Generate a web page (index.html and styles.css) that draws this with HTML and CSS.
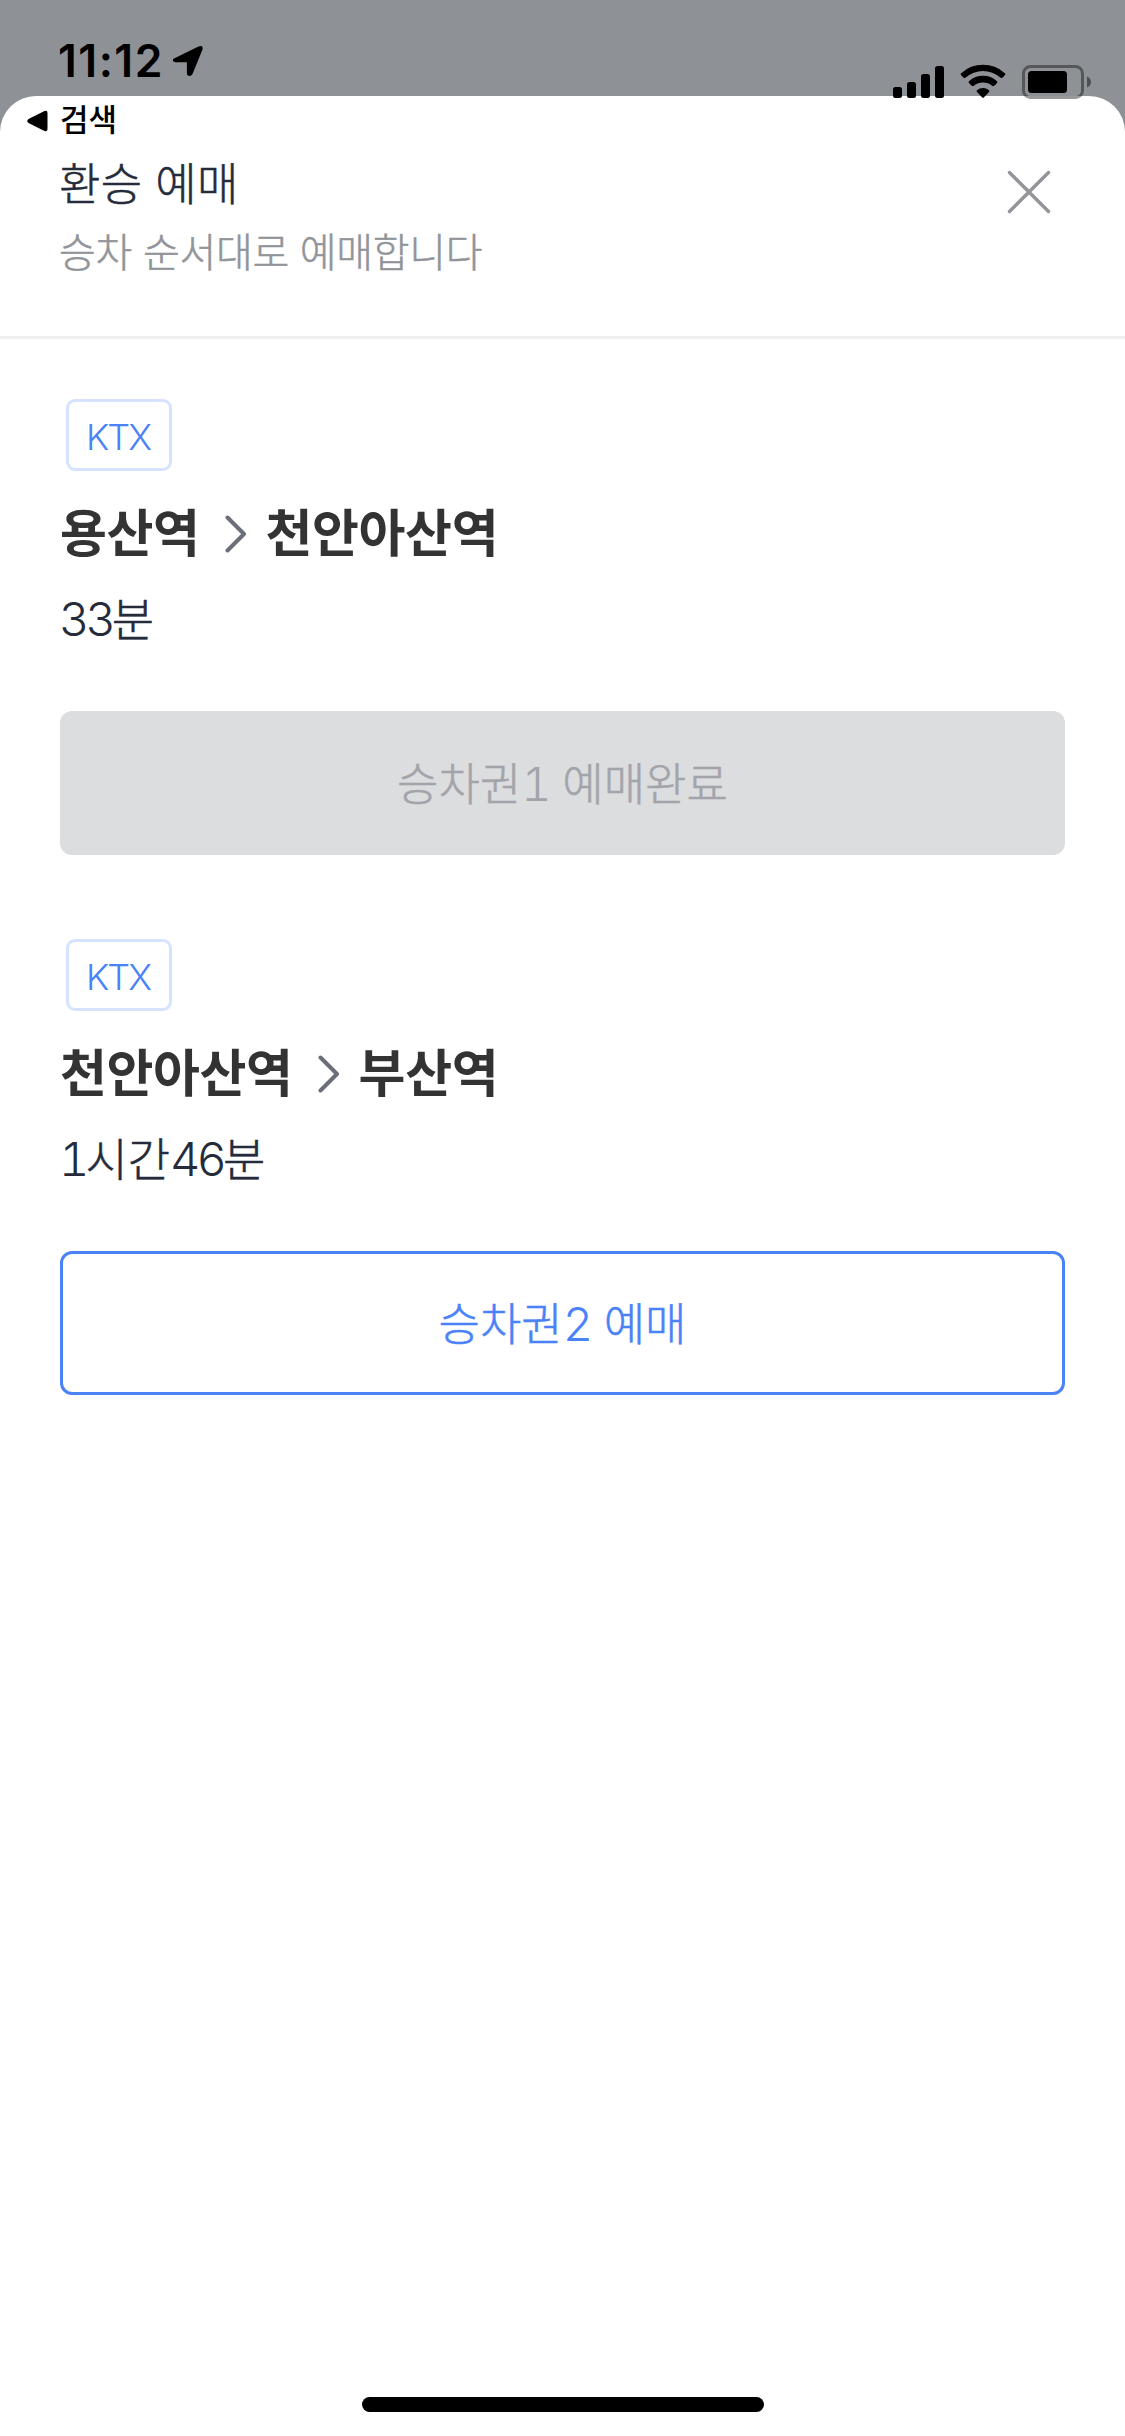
FILE: index.html
```html
<!DOCTYPE html>
<html lang="ko">
<head>
<meta charset="utf-8">
<title>환승 예매</title>
<link rel="stylesheet" href="styles.css">
</head>
<body>
<div class="screen">
  <div class="status">
    <span class="time">11:12</span>
    <svg class="location" width="32" height="32" viewBox="0 0 32 32"><path d="M2.500 13.200 26.500 1.600Q31.500-.3 30.500 4.500L20.500 29Q19.600 31 17.500 31 15 30.800 14.900 28V17.200H3.300Q.8 17 .8 15 .8 13.900 2.500 13.200Z"/></svg>
    <svg class="indicators" width="200" height="36" viewBox="0 0 200 36">
      <rect x="1" y="23" width="9" height="11" rx="2.500"/>
      <rect x="15" y="18" width="9" height="16" rx="2.500"/>
      <rect x="29" y="10" width="9" height="24" rx="2.500"/>
      <rect x="43" y="2" width="9" height="32" rx="2.500"/>
      <path d="M69.200 9.200Q68 10 69.200 11.200L71.700 13.700Q72.700 14.500 73.800 13.600A26 26 0 0 1 108.200 13.600Q109.300 14.500 110.300 13.700L112.800 11.200Q114 10 112.800 9.200A32 32 0 0 0 69.200 9.200Z"/>
      <path d="M77 17.200Q76 18 77.200 19.200L79.700 21.700Q80.700 22.500 81.900 21.700A14.500 14.500 0 0 1 100.100 21.700Q101.300 22.500 102.300 21.700L104.800 19.200Q106 18 105 17.200A21 21 0 0 0 77 17.200Z"/>
      <path d="M85 26.200Q84 27 85 28L90 33.200Q91 34.200 92 33.200L97 28Q98 27 97 26.200A9.500 9.500 0 0 0 85 26.200Z"/>
      <rect class="battery" x="131.500" y="2.500" width="59" height="31" rx="7"/>
      <rect x="136" y="7" width="39" height="22" rx="3.500"/>
      <path class="battery-tip" d="M195 12.500Q199 14 199 18T195 23.500Z"/>
    </svg>
  </div>
  <div class="back">
    <svg width="21" height="22" viewBox="0 0 21 22"><path d="M1.500 9 17.500 1Q20.500 0 20.500 3V19Q20.500 22 17.500 21L1.500 13Q-1 11 1.500 9Z"/></svg>
    <span>검색</span>
  </div>
  <main class="sheet">
    <header class="header">
      <div>
        <h1 class="title">환승 예매</h1>
        <p class="subtitle">승차 순서대로 예매합니다</p>
      </div>
      <svg class="close" width="44" height="44" viewBox="0 0 44 44"><path d="M2.500 2.500 41.500 41.500M41.500 2.500 2.500 41.500"/></svg>
    </header>
    <section class="leg">
      <span class="badge">KTX</span>
      <h2 class="route"><span>용산역</span><svg class="chevron" width="22" height="38" viewBox="0 0 22 38"><path d="M2.500 2.500 19 19 2.500 35.500"/></svg><span>천안아산역</span></h2>
      <p class="duration"><span class="num">33</span>분</p>
      <button class="button done" disabled>승차권<span class="num">1</span> 예매완료</button>
    </section>
    <section class="leg">
      <span class="badge">KTX</span>
      <h2 class="route"><span>천안아산역</span><svg class="chevron" width="22" height="38" viewBox="0 0 22 38"><path d="M2.500 2.500 19 19 2.500 35.500"/></svg><span>부산역</span></h2>
      <p class="duration"><span class="num">1</span>시간<span class="num">46</span>분</p>
      <button class="button">승차권<span class="num">2</span> 예매</button>
    </section>
  </main>
  <div class="home"></div>
</div>
</body>
</html>
```
FILE: styles.css
```css
* { box-sizing: border-box; }
body { margin: 0; }
h1, h2, p { margin: 0; }
svg { display: block; flex: none; }
.screen {
  position: relative;
  width: 1125px;
  height: 2436px;
  padding-top: 96px;
  background: #8e9195;
  overflow: hidden;
  font-family: "Noto Sans CJK KR", sans-serif;
  font-weight: 300;
}
.status {
  position: absolute;
  z-index: 1;
  inset: 0 0 auto;
  height: 100px;
  padding: 38px 33px 0 58px;
  display: flex;
  align-items: flex-start;
}
.time {
  width: 114px;
  font: 600 44.5px/46px Inter, sans-serif;
  letter-spacing: 1.5px;
}
.location { margin-top: 7px; }
.indicators { margin: 26px 0 0 auto; }
.battery { fill: none; stroke: rgba(0, 0, 0, 0.4); stroke-width: 3; }
.battery-tip { fill: rgba(0, 0, 0, 0.45); }
.back {
  position: absolute;
  z-index: 1;
  left: 27px;
  top: 98px;
  height: 40px;
  display: flex;
  align-items: center;
  gap: 12px;
  font-size: 31px;
  font-weight: 500;
  line-height: 40px;
}
.back svg { margin-top: 5px; }
.sheet {
  height: 2340px;
  border-radius: 36px 36px 0 0;
  background: #fff;
}
.header {
  height: 243px;
  padding: 55px 74px 0 59px;
  border-bottom: 3px solid #eee;
  display: flex;
  justify-content: space-between;
}
.title {
  font-size: 45px;
  font-weight: 300;
  line-height: 62px;
  letter-spacing: 0.3px;
  color: #252b3a;
}
.subtitle {
  margin-top: 7px;
  font-size: 40px;
  line-height: 60px;
  letter-spacing: -0.3px;
  color: #919499;
}
.title, .subtitle, .duration, .button { -webkit-text-stroke: 0.5px currentColor; }
.close { margin-top: 19px; fill: none; stroke: #94959b; stroke-width: 3.5; stroke-linecap: round; }
.leg {
  height: 540px;
  padding: 60px 60px 0;
  display: flex;
  flex-direction: column;
  align-items: flex-start;
}
.badge {
  width: 106px;
  height: 72px;
  margin-left: 6px;
  border: 3px solid #d6e3ff;
  border-radius: 9px;
  padding-right: 2px;
  font: 300 36px/70px Inter, sans-serif;
  letter-spacing: -2px;
  text-align: center;
  color: #4a82f7;
}
.route {
  height: 70px;
  margin-top: 24px;
  display: flex;
  align-items: center;
  font-size: 51px;
  font-weight: 700;
  line-height: 70px;
  letter-spacing: -0.4px;
  color: #333;
}
.chevron { margin: 8px 19px 0 25px; fill: none; stroke: #6b6d78; stroke-width: 4; stroke-linecap: round; stroke-linejoin: round; }
.duration {
  height: 62px;
  margin: 20px 0 0 -1px;
  font-size: 46px;
  line-height: 62px;
  color: #252b3a;
}
.num {
  font-family: Inter, sans-serif;
  font-size: 47px;
  font-variant-numeric: tabular-nums;
  letter-spacing: -4px;
  line-height: 1;
  -webkit-text-stroke: 0;
}
.button {
  width: 100%;
  height: 144px;
  margin-top: 64px;
  padding: 0 0 3px;
  border: 3px solid #4a82f7;
  border-radius: 12px;
  background: #fff;
  font: inherit;
  font-size: 45px;
  word-spacing: 2px;
  color: #4a82f7;
}
.done { border-color: #dcddde; background: #dcddde; color: #a3a4aa; }
.home {
  position: absolute;
  z-index: 1;
  left: 362px;
  bottom: 24px;
  width: 402px;
  height: 15px;
  border-radius: 8px;
  background: #000;
}
```
